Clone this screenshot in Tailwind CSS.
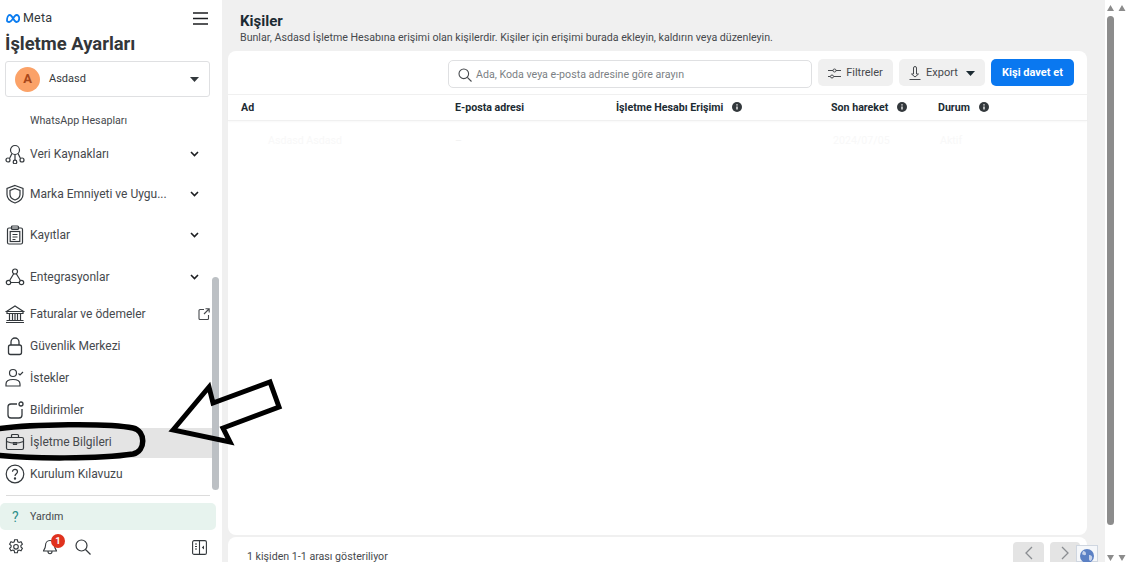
<!DOCTYPE html>
<html lang="tr">
  <head>
    <meta charset="UTF-8" />
    <title>İşletme Ayarları</title>
    <script src="https://cdn.jsdelivr.net/npm/@tailwindcss/browser@4"></script>
  </head>
  <body class="bg-white font-['Roboto',sans-serif] text-[#1c2b33] overflow-hidden">
    <div class="relative flex w-[1141px] h-[562px] overflow-hidden">
      <!-- Sidebar -->
      <aside class="w-[222px] h-[562px] shrink-0 bg-white flex flex-col text-[12px] text-[#46494d]">
        <div class="h-[34px] pl-[6px] pr-[14px] flex items-center justify-between pt-[3px]">
          <div class="flex items-center gap-[3px]">
            <svg width="14" height="9" viewBox="0 0 14 9" fill="none" stroke="#0a7cf0" stroke-width="1.800"><path d="M1 6.500C1 3.500 2.200 1 3.800 1c2.700 0 4 7 6.700 7C12.300 8 13.200 6.500 13.200 4.500S12.200 1 10.500 1C7.800 1 6.300 8 3.300 8 1.800 8 1 7.300 1 6.500z" /></svg>
            <span class="text-[12.5px] text-[#33383c] tracking-[0.2px]">Meta</span>
          </div>
          <svg width="15" height="13" viewBox="0 0 15 13" stroke="#1c1e21" stroke-width="1.5"><path d="M0 1h15M0 6.500h15M0 12h15" /></svg>
        </div>
        <h1 class="pl-[5px] h-[27px] leading-[20px] text-[18.4px] font-bold text-[#333639]">İşletme Ayarları</h1>
        <div class="ml-[5px] w-[205px] h-[36px] border border-[#dfe0e2] rounded-[3px] flex items-center pl-[9px] pr-[10px]">
          <div class="w-[25px] h-[25px] rounded-full bg-[#fba268] flex items-center justify-center text-[13px] font-bold text-[#a8471a]">A</div>
          <span class="ml-[9px] text-[11px] text-[#33383c]">Asdasd</span>
          <svg class="ml-auto" width="9" height="5" viewBox="0 0 9 5" fill="#33383c"><path d="M0 0h9L4.500 5z" /></svg>
        </div>

        <nav class="mt-[11px] flex flex-col">
          <div class="h-[26px] pl-[30px] flex items-center text-[10.7px]">WhatsApp Hesapları</div>

          <div class="h-[39px] flex items-center pl-[5px] pr-[23px]">
            <svg class="w-[20px] h-[20px] shrink-0" viewBox="0 0 20 20" fill="none" stroke="#33383c" stroke-width="1.2"><circle cx="10" cy="6" r="4.500" /><circle cx="3" cy="16" r="2" /><circle cx="10" cy="18" r="1.800" /><circle cx="17" cy="16" r="2" /><path d="M7 9.500 4.500 14.500M10 10.500v5.500M13 9.500l2.500 5" /></svg>
            <span class="ml-[5px]">Veri Kaynakları</span>
            <svg class="ml-auto" width="9" height="6" viewBox="0 0 9 6" fill="none" stroke="#1c1e21" stroke-width="1.600"><path d="M1 1l3.500 3.500L8 1" /></svg>
          </div>
          <div class="h-[41px] flex items-center pl-[5px] pr-[23px]">
            <svg class="w-[20px] h-[20px] shrink-0" viewBox="0 0 20 20" fill="none" stroke="#33383c" stroke-width="1.200"><path d="M10 1.500 18 4.500v6c0 4-3.500 7-8 8.500-4.500-1.500-8-4.500-8-8.500v-6z" /><path d="M10 4.500 15 6.500v4c0 2.500-2 4.500-5 5.500-3-1-5-3-5-5.500v-4z" /></svg>
            <span class="ml-[5px]">Marka Emniyeti ve Uygu...</span>
            <svg class="ml-auto" width="9" height="6" viewBox="0 0 9 6" fill="none" stroke="#1c1e21" stroke-width="1.600"><path d="M1 1l3.500 3.500L8 1" /></svg>
          </div>
          <div class="h-[41px] flex items-center pl-[5px] pr-[23px]">
            <svg class="w-[20px] h-[20px] shrink-0" viewBox="0 0 20 20" fill="none" stroke="#33383c" stroke-width="1.200"><rect x="2.500" y="3" width="15" height="16" rx="1.500" /><rect x="6.500" y="1" width="7" height="3.500" rx="1" /><rect x="5.200" y="6.500" width="9.600" height="10" /><path d="M7.500 9.500h5M7.500 12h5M7.500 14.500h3" /></svg>
            <span class="ml-[5px]">Kayıtlar</span>
            <svg class="ml-auto" width="9" height="6" viewBox="0 0 9 6" fill="none" stroke="#1c1e21" stroke-width="1.600"><path d="M1 1l3.500 3.500L8 1" /></svg>
          </div>
          <div class="h-[43px] flex items-center pl-[5px] pr-[23px]">
            <svg class="w-[20px] h-[20px] shrink-0" viewBox="0 0 20 20" fill="none" stroke="#33383c" stroke-width="1.200"><circle cx="10" cy="4.500" r="2.500" /><circle cx="3.500" cy="15.500" r="2.200" /><circle cx="16.500" cy="15.500" r="2.200" /><path d="M8.700 6.700 4.600 13.500M11.300 6.700l4.100 6.800M5.700 15.500h8.600" /></svg>
            <span class="ml-[5px]">Entegrasyonlar</span>
            <svg class="ml-auto" width="9" height="6" viewBox="0 0 9 6" fill="none" stroke="#1c1e21" stroke-width="1.600"><path d="M1 1l3.500 3.500L8 1" /></svg>
          </div>

          <div class="h-[32px] flex items-center pl-[5px] pr-[12px]">
            <svg class="w-[20px] h-[20px] shrink-0" viewBox="0 0 20 20" fill="none" stroke="#33383c" stroke-width="1.200"><path d="M1.500 7.500 10 2l8.500 5.500zM2 7.500h16v2H2zM1 18.500h18M1.500 16.500h17M4.500 9.500v7M7.500 9.500v7M10 9.500v7M12.500 9.500v7M15.500 9.500v7" /></svg>
            <span class="ml-[5px]">Faturalar ve ödemeler</span>
            <svg class="ml-auto" width="12" height="12" viewBox="0 0 12 12" fill="none" stroke="#46494d" stroke-width="1.100"><path d="M6 1.500H2a1 1 0 0 0-1 1v8a1 1 0 0 0 1 1h7.500a1 1 0 0 0 1-1V7M7.500 .8h3.700v3.700M11 1 6 6" /></svg>
          </div>
          <div class="h-[32px] flex items-center pl-[5px]">
            <svg class="w-[20px] h-[20px] shrink-0" viewBox="0 0 20 20" fill="none" stroke="#33383c" stroke-width="1.300"><rect x="3.500" y="9" width="13" height="9.500" rx="2" /><path d="M6 9V6a4 4 0 0 1 8 0v3" /></svg>
            <span class="ml-[5px]">Güvenlik Merkezi</span>
          </div>
          <div class="h-[32px] flex items-center pl-[5px]">
            <svg class="w-[20px] h-[20px] shrink-0" viewBox="0 0 20 20" fill="none" stroke="#33383c" stroke-width="1.200"><circle cx="8" cy="5" r="3.500" /><path d="M1 18v-2c0-3 2.500-4.500 7-4.500s7 1.500 7 4.500v2zM13.500 5.500l1.500 1.500 3-3" /></svg>
            <span class="ml-[5px]">İstekler</span>
          </div>
          <div class="h-[32px] flex items-center pl-[5px]">
            <svg class="w-[20px] h-[20px] shrink-0" viewBox="0 0 20 20" fill="none" stroke="#33383c" stroke-width="1.300"><path d="M12 4H6a3 3 0 0 0-3 3v8a3 3 0 0 0 3 3h8a3 3 0 0 0 3-3V9" /><circle cx="16" cy="4" r="2" /></svg>
            <span class="ml-[5px]">Bildirimler</span>
          </div>
          <div class="h-[32px] pt-[2px]">
            <div class="w-[213px] h-[30px] flex items-center pl-[5px] pb-[2px] bg-[#e4e4e4]">
              <svg class="w-[20px] h-[20px] shrink-0" viewBox="0 0 20 20" fill="none" stroke="#33383c" stroke-width="1.200"><rect x="1.500" y="5.500" width="17" height="12" rx="1.500" /><path d="M6.500 5.500v-2a1 1 0 0 1 1-1h5a1 1 0 0 1 1 1v2M1.500 9.500c5 2 12 2 17 0M8.500 10.500h3v2h-3z" /></svg>
              <span class="ml-[5px]">İşletme Bilgileri</span>
            </div>
          </div>
          <div class="h-[32px] flex items-center pl-[5px]">
            <svg class="w-[20px] h-[20px] shrink-0" viewBox="0 0 20 20" fill="none" stroke="#33383c" stroke-width="1.200"><circle cx="10" cy="10" r="8.800" /><path d="M7.500 7.800c0-3.200 5-3.200 5 0 0 2-2.500 2-2.500 4.200" /><circle cx="10" cy="14.500" r=".6" fill="#33383c" /></svg>
            <span class="ml-[5px]">Kurulum Kılavuzu</span>
          </div>
        </nav>

        <div class="mt-[5px] ml-[6px] w-[204px] border-t border-[#dcdcdc]"></div>
        <div class="mt-[7px] w-[216px] h-[27px] bg-[#e7f3ee] rounded-[5px] flex items-center text-[10.7px] pl-[12px] pt-[1px]">
          <span class="text-[14px] text-[#2d8f8a] w-[18px]">?</span>
          <span>Yardım</span>
        </div>
        <div class="mt-[5px] h-[24px] flex items-center pl-[8px] pr-[15px]">
          <svg width="16" height="16" viewBox="0 0 16 16" fill="none" stroke="#33383c" stroke-width="1.100"><path d="M6.600.8h2.800l.4 2 1.300.7 1.900-.7 1.400 2.400-1.500 1.300v1.500l1.500 1.300-1.400 2.400-1.900-.7-1.300.7-.4 2H6.600l-.4-2-1.300-.7-1.900.7L1.600 9.300l1.500-1.300V6.500L1.600 5.200 3 2.800l1.900.7 1.300-.7z" /><circle cx="8" cy="7.800" r="2.300" /></svg>
          <div class="relative ml-[18px]">
            <svg width="16" height="16" viewBox="0 0 16 16" fill="none" stroke="#33383c" stroke-width="1.100"><path d="M8 1.500c-3 0-4.500 2.500-4.500 5 0 3-2 4.500-2 5.500h13c0-1-2-2.500-2-5.500 0-2.500-1.500-5-4.500-5zM6 12.500c0 3 4 3 4 0" /></svg>
            <span class="absolute -top-[5px] left-[9px] w-[14px] h-[14px] rounded-full bg-[#e0321e] text-white text-[9.5px] font-bold flex items-center justify-center">1</span>
          </div>
          <svg class="ml-[17px]" width="16" height="16" viewBox="0 0 16 16" fill="none" stroke="#33383c" stroke-width="1.200"><circle cx="6.500" cy="6.500" r="5.500" /><path d="M10.500 10.500l5 5" /></svg>
          <svg class="ml-auto" width="15" height="15" viewBox="0 0 15 15" fill="none" stroke="#33383c" stroke-width="1.100"><rect x=".6" y=".6" width="13.800" height="13.800" rx="1.500" /><path d="M7.500.6v13.800M3 4h2M3 6.500h2M3 9h2" /><path d="M12 5.500v4L9.800 7.500z" fill="#33383c" stroke="none" /></svg>
        </div>
      </aside>

      <!-- Main -->
      <main class="w-[883px] h-[562px] shrink-0 bg-[#f0f0f0] pl-[6px] flex flex-col">
        <div class="h-[51px] pl-[12px] pt-[12px] shrink-0">
          <h2 class="text-[15px] leading-[18px] font-bold text-[#1c2b33]">Kişiler</h2>
          <p class="text-[10.65px] leading-[14px] mt-[1px] text-[#46494d]">Bunlar, Asdasd İşletme Hesabına erişimi olan kişilerdir. Kişiler için erişimi burada ekleyin, kaldırın veya düzenleyin.</p>
        </div>

        <div class="w-[859px] h-[484px] bg-white rounded-[8px] flex flex-col shrink-0">
          <div class="h-[44px] flex items-center justify-end pr-[13px] gap-[6px] border-b border-[#f0f0f0]">
            <div class="w-[364px] h-[28px] mt-[3px] border border-[#dfe0e2] rounded-[5px] flex items-center pl-[9px] pt-[1px] text-[10.65px] text-[#7b7f84]">
              <svg width="14" height="14" viewBox="0 0 14 14" fill="none" stroke="#46494d" stroke-width="1.100"><circle cx="5.800" cy="5.800" r="4.800" /><path d="M9.300 9.300l4.200 4.200" /></svg>
              <span class="ml-[4px]">Ada, Koda veya e-posta adresine göre arayın</span>
            </div>
            <div class="w-[75px] h-[27px] bg-[#f0f0f0] rounded-[5px] flex items-center justify-center gap-[5px] pt-[1px] text-[11px] text-[#46494d]">
              <svg width="13" height="11" viewBox="0 0 13 11" fill="none" stroke="#46494d" stroke-width="1"><path d="M0 2.500h5M8 2.500h5M0 8.500h2M6 8.500h7" /><circle cx="6.500" cy="2.500" r="1.500" /><circle cx="4" cy="8.500" r="1.500" /></svg>
              Filtreler
            </div>
            <div class="w-[86px] h-[27px] bg-[#f0f0f0] rounded-[5px] flex items-center pl-[10px] pt-[1px] text-[11px] text-[#46494d]">
              <svg width="12" height="14" viewBox="0 0 12 14" fill="none" stroke="#46494d" stroke-width="1"><path d="M4.500 4V2a1.500 1.500 0 0 1 3 0v2M4.500 4v4H2.500L6 11l3.500-3h-2V4M.5 13.500h11" /></svg>
              <span class="ml-[5px]">Export</span>
              <svg class="ml-[8px]" width="9" height="5" viewBox="0 0 9 5" fill="#1c2b33"><path d="M0 0h9L4.500 5z" /></svg>
            </div>
            <div class="w-[83px] h-[27px] bg-[#0a78f0] rounded-[5px] flex items-center justify-center pt-[1px] text-[11px] font-bold text-white">Kişi davet et</div>
          </div>
          <div class="h-[26px] flex items-center text-[10.65px] font-bold text-[#1c2b33] border-b border-[#f0f0f0] shadow-[0_1px_2px_rgba(0,0,0,0.03)]">
            <span class="ml-[13px] w-[214px]">Ad</span>
            <span class="w-[161px]">E-posta adresi</span>
            <span class="w-[215px] flex items-center gap-[9px]">İşletme Hesabı Erişimi
              <svg width="10" height="10" viewBox="0 0 10 10"><circle cx="5" cy="5" r="5" fill="#33383c" /><path d="M5 4.500v3M5 2.200v1.200" stroke="#fff" stroke-width="1.300" /></svg>
            </span>
            <span class="w-[107px] flex items-center gap-[9px]">Son hareket
              <svg width="10" height="10" viewBox="0 0 10 10"><circle cx="5" cy="5" r="5" fill="#33383c" /><path d="M5 4.500v3M5 2.200v1.200" stroke="#fff" stroke-width="1.300" /></svg>
            </span>
            <span class="flex items-center gap-[9px]">Durum
              <svg width="10" height="10" viewBox="0 0 10 10"><circle cx="5" cy="5" r="5" fill="#33383c" /><path d="M5 4.500v3M5 2.200v1.200" stroke="#fff" stroke-width="1.300" /></svg>
            </span>
          </div>
          <div class="h-[40px] flex items-center text-[10.65px] text-[#f8f8f8]">
            <span class="ml-[40px] w-[187px]">Asdasd Asdasd</span>
            <span class="w-[378px] text-[#f2f2f2]">–</span>
            <span class="w-[107px]">2024/07/05</span>
            <span>Aktif</span>
          </div>
        </div>

        <div class="mt-[2px] w-[859px] flex-1 bg-white rounded-t-[8px] flex items-end">
          <p class="ml-[19px] mb-[-1px] text-[10.65px] leading-[14px] text-[#46494d]">1 kişiden 1-1 arası gösteriliyor</p>
          <div class="ml-auto mr-[7px] flex gap-[6px] self-start mt-[5px]">
            <div class="w-[31px] h-[21px] bg-[#e4e4e4] rounded-t-[4px] flex items-center justify-center">
              <svg width="8" height="14" viewBox="0 0 8 14" fill="none" stroke="#8a8d91" stroke-width="1.300"><path d="M7 1 1 7l6 6" /></svg>
            </div>
            <div class="w-[30px] h-[21px] bg-[#e4e4e4] rounded-t-[4px] flex items-center justify-center">
              <svg width="8" height="14" viewBox="0 0 8 14" fill="none" stroke="#8a8d91" stroke-width="1.300"><path d="M1 1l6 6-6 6" /></svg>
            </div>
          </div>
        </div>
      </main>

      <!-- Scrollbars on the right -->
      <div class="w-[36px] h-[562px] shrink-0 bg-white"></div>

      <!-- Overlays -->
      <div class="absolute left-[212px] top-[277px] w-[7px] h-[213px] rounded-full bg-[#bcc0c4]"></div>
      <div class="absolute left-[1107px] top-[16px] w-[7px] h-[509px] rounded-full bg-[#8c8c8c]"></div>
      <svg class="absolute left-[1107px] top-[5px]" width="20" height="6" viewBox="0 0 20 6" fill="#8c8c8c"><path d="M0 6 3.500 0 7 6zM11.500 6 15 0l3.500 6z" /></svg>
      <svg class="absolute left-[1107px] top-[555px]" width="20" height="6" viewBox="0 0 20 6" fill="#8c8c8c"><path d="M0 0h7L3.500 6zM11.500 0h7L15 6z" /></svg>
      <div class="absolute left-[1076px] top-[545px] w-[22px] h-[17px] bg-[#f5f7fa] border border-[#cfd6e0] flex items-start justify-center pt-[3px]">
        <svg width="14" height="14" viewBox="0 0 14 14"><circle cx="7" cy="7" r="7" fill="#5b80c4" /><path d="M3 2c2 0 3 1 3 3S3 6 2 5zM9 6c2 0 4 1 3 4s-3 2-3 0z" fill="#c6d2ea" /></svg>
      </div>

      <!-- Annotation drawn on top of the screenshot -->
      <svg class="absolute left-0 top-0 pointer-events-none" width="300" height="562" viewBox="0 0 300 562" fill="none" stroke="#000">
        <path d="M-4 429C30 424 110 423 133 428 146 431 146 451 133 454 100 459 30 459-4 455" stroke-width="5.500" />
        <path d="M173 430 209 387 213 403 270 382 279 407 223 428 230 442z" stroke-width="5" stroke-linejoin="miter" />
      </svg>
    </div>
  </body>
</html>
